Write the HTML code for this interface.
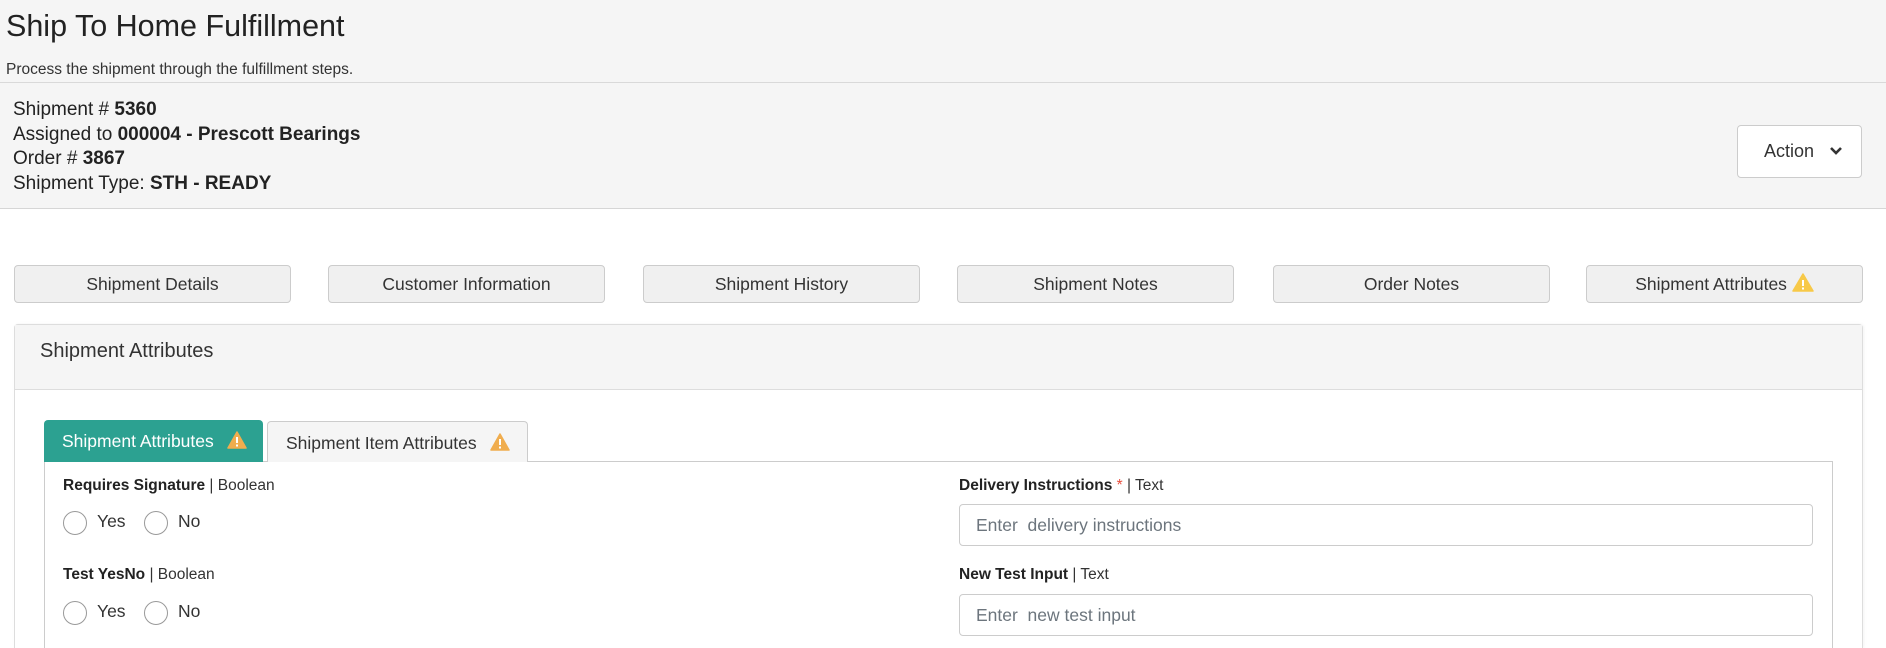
<!DOCTYPE html>
<html><head><meta charset="utf-8"><style>
*{box-sizing:border-box;margin:0;padding:0}
html,body{width:1886px;height:648px;overflow:hidden}
body{background:#fff;font-family:"Liberation Sans",Arial,sans-serif;color:#333;position:relative}
.a{position:absolute}
.top{left:0;top:0;width:1886px;height:209px;background:#f5f5f5;border-bottom:1px solid #d6d6d6}
.btn{position:absolute;top:265px;width:277px;height:38px;background:#f0f0f0;border:1px solid #ccc;border-radius:4px;font-size:17.5px;color:#333;text-align:center;line-height:36px}
.warn{display:inline-block;vertical-align:-2px}
.radio{position:absolute;width:24px;height:24px;border:1px solid #999;border-radius:50%;background:#fff}
.lbl{position:absolute;font-size:15.5px;color:#333}
.lbl b{font-weight:bold;color:#222}
.inp{position:absolute;left:959px;width:854px;height:42px;border:1px solid #ccc;border-radius:4px;background:#fff;font-size:17.5px;color:#6c757d;padding-left:16px;line-height:40px}
.rt{position:absolute;font-size:17.5px;color:#333}
</style></head><body>
<div class="a top"></div>
<div class="a" style="left:0;top:82px;width:1886px;border-top:1px solid #d9d9d9"></div>
<div class="a" style="left:6px;top:9px;font-size:30.5px;color:#222">Ship To Home Fulfillment</div>
<div class="a" style="left:6px;top:61px;font-size:15.5px;color:#333">Process the shipment through the fulfillment steps.</div>
<div class="a" style="left:13px;top:98px;font-size:19px;line-height:24.5px;color:#222">
Shipment # <b>5360</b><br>Assigned to <b>000004 - Prescott Bearings</b><br>Order # <b>3867</b><br>Shipment Type: <b>STH - READY</b></div>
<div class="a" style="left:1737px;top:125px;width:125px;height:53px;border:1px solid #ccc;border-radius:4px;background:#fff;font-size:18px;line-height:51px;padding-left:26px;color:#333">Action <svg width="14" height="10" viewBox="0 0 14 10" style="margin-left:10px;vertical-align:1px"><path d="M2 2 L7 7 L12 2" stroke="#333" stroke-width="2.6" fill="none"/></svg></div>

<div class="btn" style="left:14px">Shipment Details</div>
<div class="btn" style="left:328px">Customer Information</div>
<div class="btn" style="left:643px">Shipment History</div>
<div class="btn" style="left:957px">Shipment Notes</div>
<div class="btn" style="left:1273px">Order Notes</div>
<div class="btn" style="left:1586px">Shipment Attributes <svg class="warn" width="22" height="19" viewBox="0 0 22 19"><path d="M11 1 L21 18 L1 18 Z" fill="#f7c948" stroke="#f7c948" stroke-linejoin="round" stroke-width="1.5"/><rect x="10" y="7" width="2" height="6" fill="#fff"/><rect x="10" y="14.5" width="2" height="2" fill="#fff"/></svg></div>

<div class="a" style="left:14px;top:324px;width:1849px;height:324px;border:1px solid #ddd;border-bottom:none;border-radius:4px 4px 0 0;background:#fff;box-shadow:1px 0 3px rgba(0,0,0,0.05)"></div>
<div class="a" style="left:15px;top:325px;width:1847px;height:65px;background:#f5f5f5;border-bottom:1px solid #ddd"></div>
<div class="a" style="left:40px;top:340px;font-size:20px;color:#333">Shipment Attributes</div>

<div class="a" style="left:44px;top:461px;width:1789px;height:187px;border:1px solid #ccc;border-bottom:none"></div>
<div class="a" style="left:44px;top:420px;width:219px;height:42px;background:#2ca191;border-radius:4px 4px 0 0;color:#fff;font-size:17.5px;line-height:42px;padding-left:18px">Shipment Attributes <svg class="warn" width="20" height="18" viewBox="0 0 20 18" style="margin-left:8px"><path d="M10 1 L19 17 L1 17 Z" fill="#f0ad4e" stroke="#f0ad4e" stroke-linejoin="round" stroke-width="1.5"/><rect x="9" y="6" width="2" height="6" fill="#fff"/><rect x="9" y="13.5" width="2" height="2" fill="#fff"/></svg></div>
<div class="a" style="left:267px;top:421px;width:261px;height:41px;background:#f5f5f5;border:1px solid #ccc;border-bottom:none;border-radius:4px 4px 0 0;color:#333;font-size:17.5px;line-height:42px;padding-left:18px">Shipment Item Attributes <svg class="warn" width="20" height="18" viewBox="0 0 20 18" style="margin-left:8px"><path d="M10 1 L19 17 L1 17 Z" fill="#f0ad4e" stroke="#f0ad4e" stroke-linejoin="round" stroke-width="1.5"/><rect x="9" y="6" width="2" height="6" fill="#fff"/><rect x="9" y="13.5" width="2" height="2" fill="#fff"/></svg></div>

<div class="lbl" style="left:63px;top:477px"><b>Requires Signature</b> | Boolean</div>
<div class="radio" style="left:63px;top:511px"></div><div class="rt" style="left:97px;top:511px">Yes</div>
<div class="radio" style="left:144px;top:511px"></div><div class="rt" style="left:178px;top:511px">No</div>
<div class="lbl" style="left:63px;top:566px"><b>Test YesNo</b> | Boolean</div>
<div class="radio" style="left:63px;top:601px"></div><div class="rt" style="left:97px;top:601px">Yes</div>
<div class="radio" style="left:144px;top:601px"></div><div class="rt" style="left:178px;top:601px">No</div>

<div class="lbl" style="left:959px;top:477px"><b>Delivery Instructions</b> <span style="color:#e74c3c">*</span> | Text</div>
<div class="inp" style="top:504px">Enter&nbsp; delivery instructions</div>
<div class="lbl" style="left:959px;top:566px"><b>New Test Input</b> | Text</div>
<div class="inp" style="top:594px">Enter&nbsp; new test input</div>
</body></html>
